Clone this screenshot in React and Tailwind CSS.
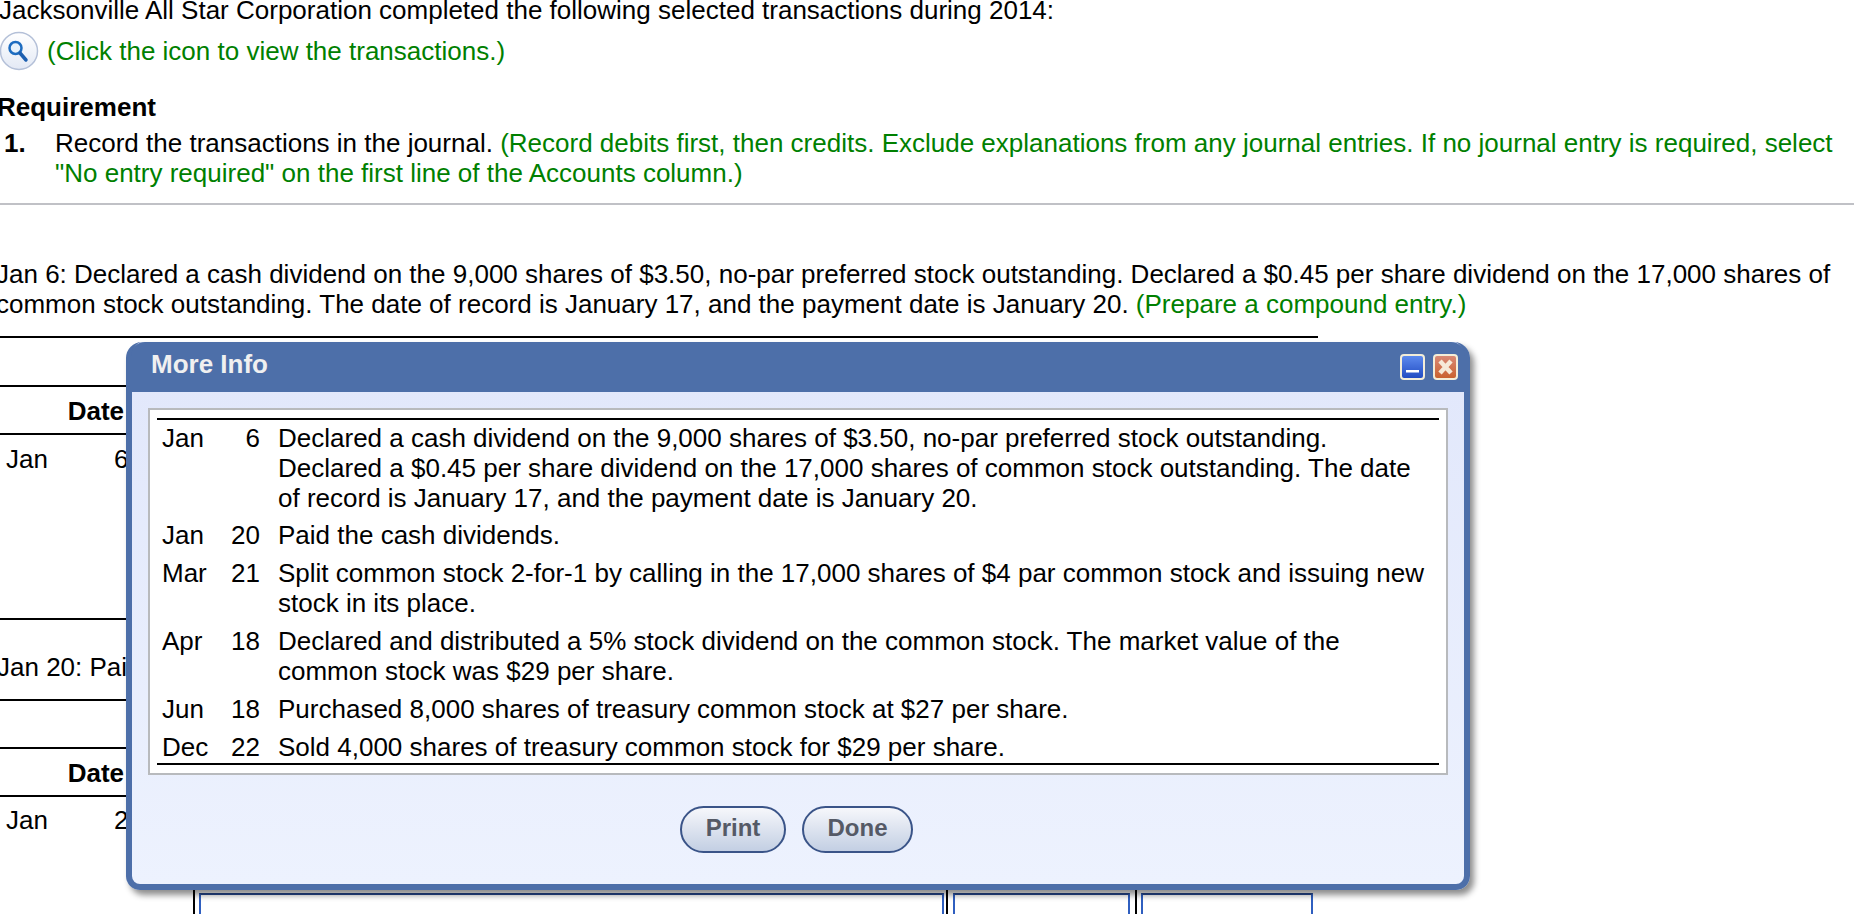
import React from "react";

const rows = [
  {
    month: "Jan",
    day: "6",
    lines: [
      "Declared a cash dividend on the 9,000 shares of $3.50, no-par preferred stock outstanding.",
      "Declared a $0.45 per share dividend on the 17,000 shares of common stock outstanding. The date",
      "of record is January 17, and the payment date is January 20.",
    ],
  },
  { month: "Jan", day: "20", lines: ["Paid the cash dividends."] },
  {
    month: "Mar",
    day: "21",
    lines: [
      "Split common stock 2-for-1 by calling in the 17,000 shares of $4 par common stock and issuing new",
      "stock in its place.",
    ],
  },
  {
    month: "Apr",
    day: "18",
    lines: [
      "Declared and distributed a 5% stock dividend on the common stock. The market value of the",
      "common stock was $29 per share.",
    ],
  },
  { month: "Jun", day: "18", lines: ["Purchased 8,000 shares of treasury common stock at $27 per share."] },
  { month: "Dec", day: "22", lines: ["Sold 4,000 shares of treasury common stock for $29 per share."] },
];

const SearchIcon = () => (
  <svg width="40" height="40" viewBox="0 0 40 40" className="shrink-0 -ml-px">
    <defs>
      <linearGradient id="iconBg" x1="0" y1="0" x2="0" y2="1">
        <stop offset="0" stopColor="#ffffff" />
        <stop offset="1" stopColor="#e3e9f5" />
      </linearGradient>
    </defs>
    <circle cx="20" cy="20" r="18.5" fill="url(#iconBg)" stroke="#b4c0d8" strokeWidth="1.5" />
    <circle cx="16.5" cy="17" r="6" fill="#e8f2fb" stroke="#1d6cc0" strokeWidth="2.5" />
    <path d="M21 22 L27 29" stroke="#1d5fb0" strokeWidth="3.5" strokeLinecap="round" />
  </svg>
);

const WinButton = ({ close }) => (
  <svg width="25" height="26" viewBox="0 0 25 26">
    <defs>
      <linearGradient id="minBg" x1="0" y1="0" x2="0" y2="1">
        <stop offset="0" stopColor="#5f8df0" />
        <stop offset="1" stopColor="#1f49c0" />
      </linearGradient>
      <linearGradient id="closeBg" x1="0" y1="0" x2="0" y2="1">
        <stop offset="0" stopColor="#d98a78" />
        <stop offset="1" stopColor="#c9602c" />
      </linearGradient>
    </defs>
    <rect x="1" y="1" width="23" height="24" rx="3" fill={close ? "url(#closeBg)" : "url(#minBg)"} stroke="#f3edd8" strokeWidth="2" />
    {close ? (
      <path d="M7 7 L18 19 M18 7 L7 19" stroke="#f6ead8" strokeWidth="4.5" />
    ) : (
      <rect x="6" y="16" width="13" height="2.5" fill="#ffffff" />
    )}
  </svg>
);

const PillButton = ({ label, width }) => (
  <button className={`${width} h-[47px] pb-[3px] rounded-full border-2 border-[#3a5488] bg-gradient-to-b from-[#f6f7fb] to-[#c3cfe3] text-[24px] font-bold text-[#555a66]`}>
    {label}
  </button>
);

const MoreInfo = () => (
  <div className="absolute left-[126px] top-[342px] w-[1344px] h-[548px] rounded-t-[16px] rounded-b-[14px] border-[6px] border-t-0 border-[#4d6fa9] bg-gradient-to-b from-[#e1e7fb] to-[#edf2fe] shadow-[4px_5px_6px_rgba(0,0,0,0.45)] flex flex-col">
    <div className="h-[50px] bg-[#4d6fa9] -mx-px flex items-center justify-between pl-[20px] pr-[7px] rounded-t-[14px]">
      <span className="-mt-[6px] text-[26px] font-bold text-[#f0f0f0]">More Info</span>
      <div className="flex gap-[8px]">
        <WinButton />
        <WinButton close />
      </div>
    </div>
    <div className="mt-[16px] ml-[16px] w-[1300px] h-[367px] border-2 border-[#b8babd] bg-white px-[7px] pt-[8px]">
      <div className="h-[347px] border-y-2 border-black pt-[3px]">
        {rows.map((row, i) => (
          <div key={i} className="flex pb-[8px] first:pb-[7px] pl-[5px] last:pb-0">
            <span className="w-[61px]">{row.month}</span>
            <span className="w-[37px] text-right">{row.day}</span>
            <div className="ml-[18px] whitespace-nowrap">
              {row.lines.map((l) => (
                <div key={l}>{l}</div>
              ))}
            </div>
          </div>
        ))}
      </div>
    </div>
    <div className="mt-[31px] ml-[548px] flex gap-[16px]">
      <PillButton label="Print" width="w-[106px]" />
      <PillButton label="Done" width="w-[111px]" />
    </div>
  </div>
);

export default function App() {
  return (
    <div className="relative h-[914px] overflow-hidden bg-white font-['Liberation_Sans',Arial,sans-serif] text-[26px] leading-[30px] text-black">
      <p className="-mt-[5px] -ml-px whitespace-nowrap">
        Jacksonville All Star Corporation completed the following selected transactions during 2014:
      </p>
      <div className="mt-[4px] flex h-[44px] items-center gap-[8px] text-[#008000]">
        <SearchIcon />
        <span>(Click the icon to view the transactions.)</span>
      </div>
      <p className="mt-[19px] -ml-[3px] font-bold">Requirement</p>
      <div className="flex mt-[6px]">
        <span className="w-[55px] pl-[4px] font-bold">1.</span>
        <div className="whitespace-nowrap">
          <div>
            Record the transactions in the journal.{" "}
            <span className="text-[#008000]">
              (Record debits first, then credits. Exclude explanations from any journal entries. If no journal entry is required, select
            </span>
          </div>
          <div className="text-[#008000]">"No entry required" on the first line of the Accounts column.)</div>
        </div>
      </div>
      <div className="mt-[15px] h-[2px] bg-[#c0c1c6]" />
      <div className="mt-[54px] -ml-[4px] whitespace-nowrap">
        <div>
          Jan 6: Declared a cash dividend on the 9,000 shares of $3.50, no-par preferred stock outstanding. Declared a $0.45 per share dividend on the 17,000 shares of
        </div>
        <div>
          common stock outstanding. The date of record is January 17, and the payment date is January 20.{" "}
          <span className="text-[#008000]">(Prepare a compound entry.)</span>
        </div>
      </div>

      <div className="mt-[17px] w-[1318px] border-t-2 border-black" />
      <div className="mt-[47px] w-[1318px] h-[50px] pt-[2px] border-y-2 border-black flex items-center">
        <span className="w-[124px] text-right font-bold">Date</span>
      </div>
      <div className="flex h-[183px] w-[1318px] pt-[9px]">
        <span className="pl-[6px] w-[114px]">Jan</span>
        <span>6</span>
      </div>
      <div className="w-[1318px] border-t-2 border-black pt-[32px]">
        <span className="-ml-[3px]">Jan 20: Paid the cash dividends.</span>
      </div>
      <div className="mt-[17px] w-[1318px] border-t-2 border-black" />
      <div className="mt-[46px] w-[1318px] h-[50px] pt-[2px] border-y-2 border-black flex items-center">
        <span className="w-[124px] text-right font-bold">Date</span>
      </div>
      <div className="flex w-[1318px] pt-[8px]">
        <span className="pl-[6px] w-[114px]">Jan</span>
        <span>2</span>
      </div>

      <div className="absolute left-[193px] bottom-0 top-[890px] flex">
        <div className="w-[753px] border-l-2 border-black pl-[4px] pt-[3px]">
          <div className="h-[30px] w-[745px] border-2 border-b-0 border-[#2f5fc0] border-t-[#27488f]" />
        </div>
        <div className="w-[189px] border-l-2 border-black pl-[5px] pt-[3px]">
          <div className="h-[30px] w-[177px] border-2 border-b-0 border-[#2f5fc0] border-t-[#27488f]" />
        </div>
        <div className="w-[180px] border-l-2 border-black pl-[4px] pt-[3px]">
          <div className="h-[30px] w-[172px] border-2 border-b-0 border-[#2f5fc0] border-t-[#27488f]" />
        </div>
      </div>

      <MoreInfo />
    </div>
  );
}
